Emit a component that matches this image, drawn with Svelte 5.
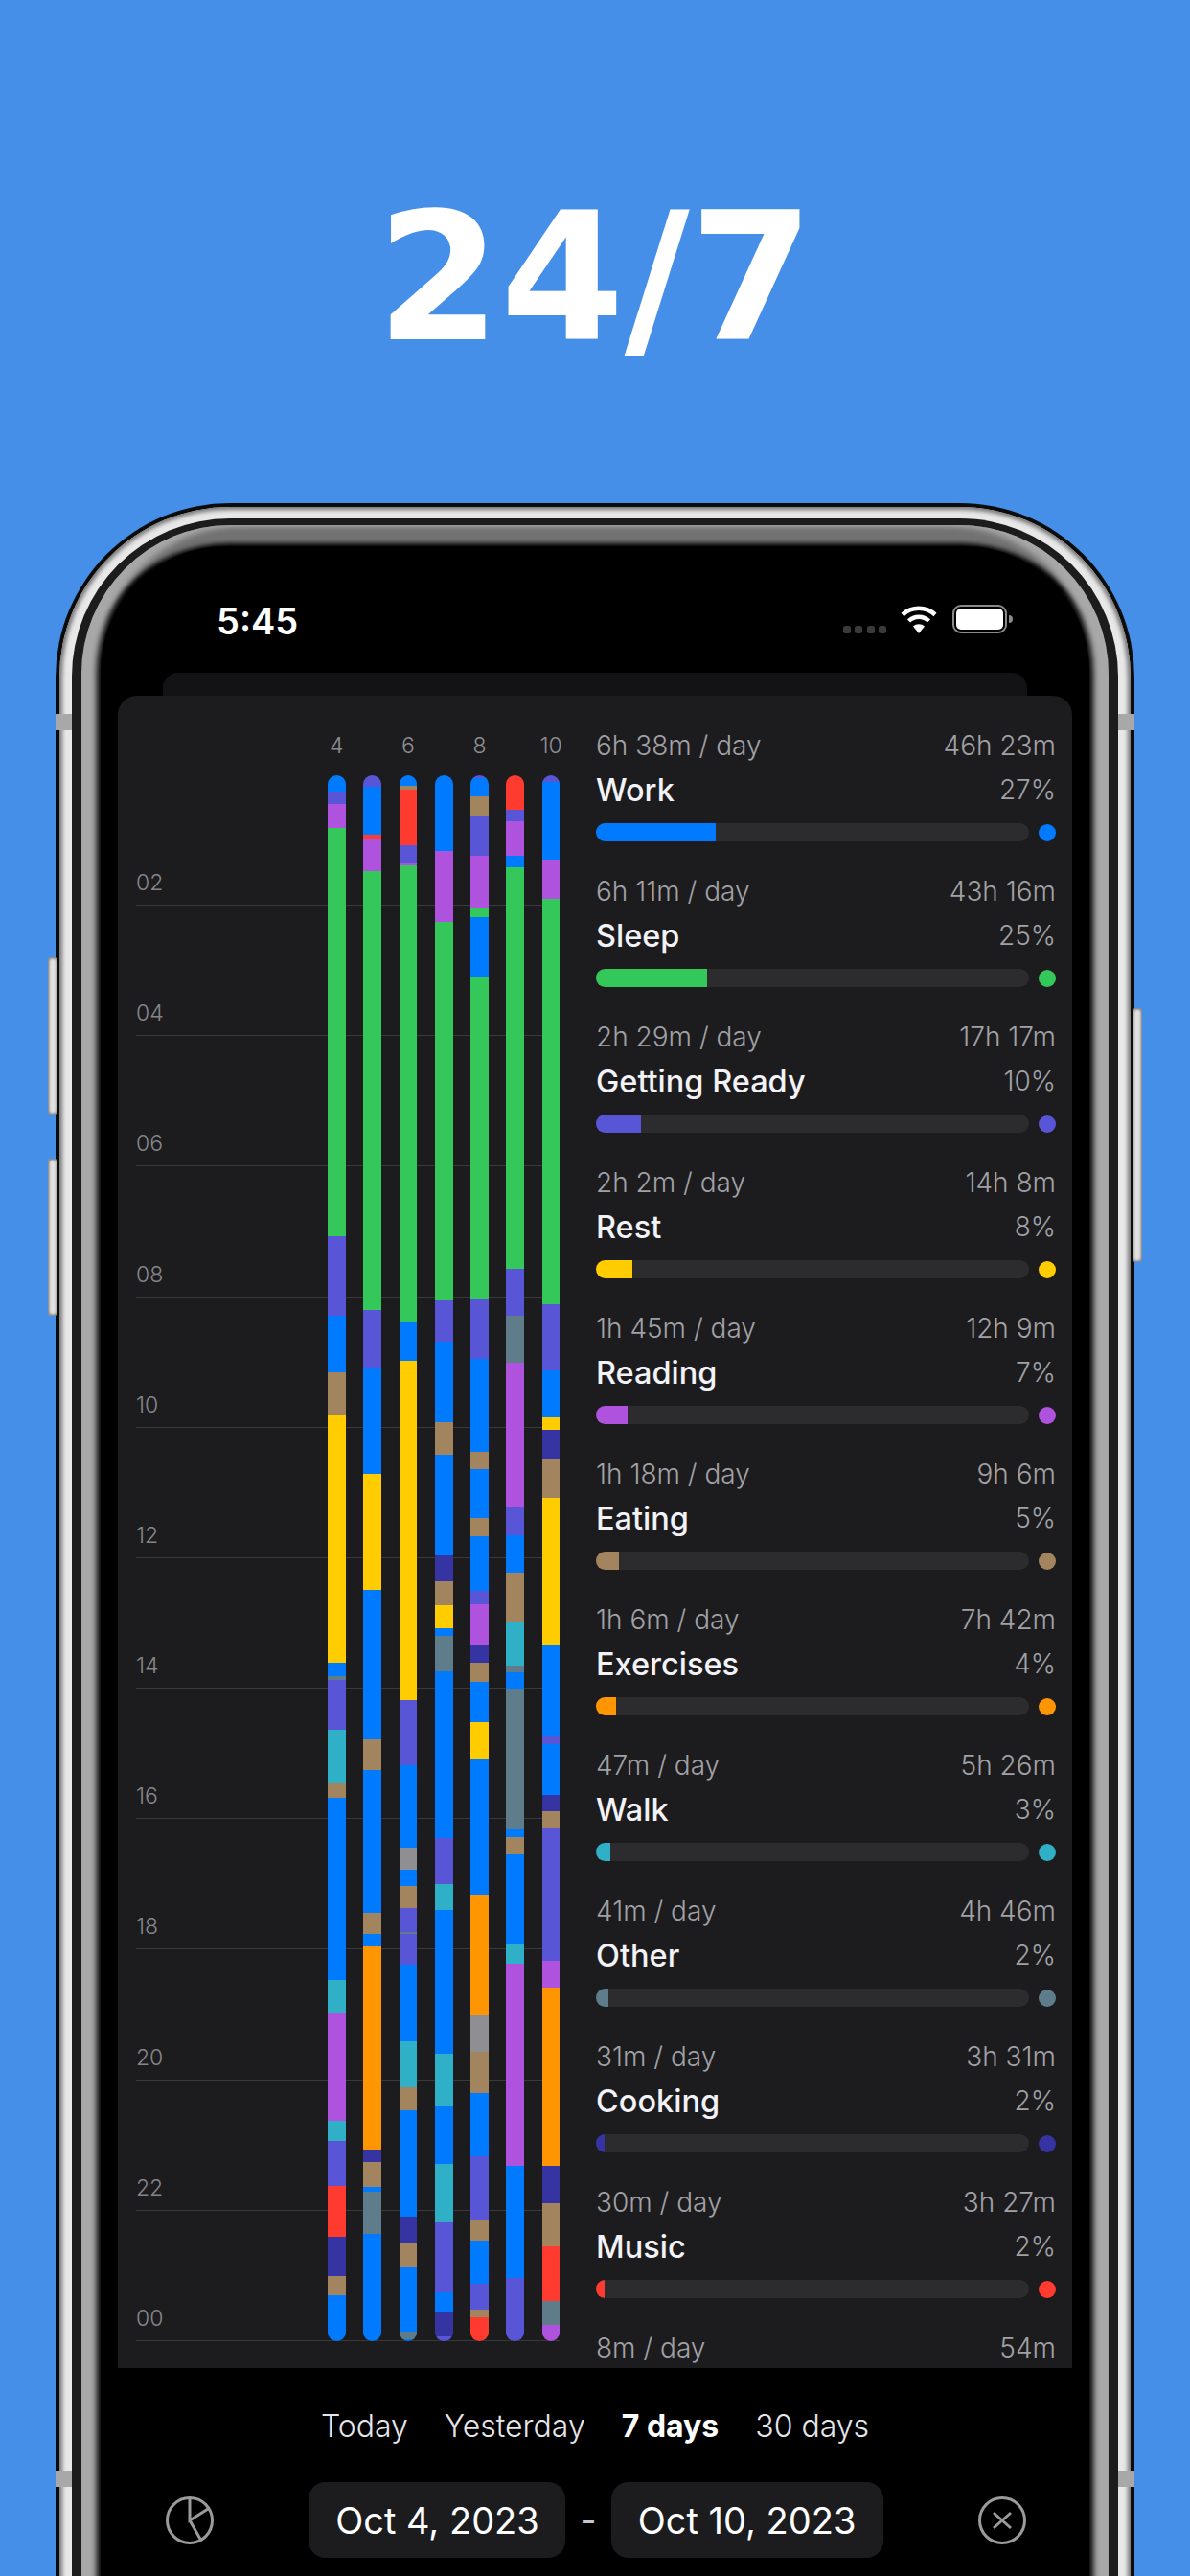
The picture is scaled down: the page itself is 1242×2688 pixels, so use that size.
<script>
	const c = {
		blue: '#007aff',
		green: '#34c759',
		purple: '#af52de',
		indigo: '#5856d6',
		brown: '#a2845e',
		yellow: '#ffcc00',
		orange: '#ff9500',
		red: '#ff3b30',
		teal: '#30b0c7',
		navy: '#3634a3',
		slate: '#5f7c8a',
		gray: '#8e8e93'
	};

	const hours = ['02', '04', '06', '08', '10', '12', '14', '16', '18', '20', '22', '00'];
	const heads = ['4', '', '6', '', '8', '', '10'];

	// each pair is colour + the y where that block stops, measured on the day axis
	const days = [
		['blue', 825, 'indigo', 837.9, 'purple', 862.9, 'green', 1288.9, 'indigo', 1371.8, 'blue', 1430.7, 'brown', 1476.4, 'yellow', 1733.9, 'blue', 1747.9, 'slate', 1752.1, 'indigo', 1803.9, 'teal', 1859.3, 'brown', 1875.4, 'blue', 2065, 'teal', 2098.9, 'purple', 2211.8, 'teal', 2232.9, 'indigo', 2280, 'red', 2333.6, 'navy', 2374.6, 'brown', 2394.3, 'blue', 2442],
		['indigo', 820, 'blue', 870, 'red', 875.4, 'purple', 907.9, 'green', 1366, 'indigo', 1426.4, 'blue', 1537.1, 'yellow', 1657.9, 'blue', 1813.9, 'brown', 1846, 'blue', 1995, 'brown', 2017.5, 'blue', 2030, 'orange', 2242, 'navy', 2255, 'brown', 2281, 'blue', 2286.4, 'slate', 2329.6, 'blue', 2442],
		['blue', 819.3, 'brown', 822.9, 'red', 881.4, 'indigo', 900, 'purple', 902.1, 'green', 1378.9, 'blue', 1418.9, 'yellow', 1772.9, 'indigo', 1840.7, 'blue', 1927, 'gray', 1950, 'blue', 1967, 'brown', 1990.4, 'indigo', 2015, 'slate', 2017, 'indigo', 2048.6, 'blue', 2128.9, 'teal', 2177, 'brown', 2201, 'blue', 2312, 'navy', 2339, 'brown', 2365, 'blue', 2432, 'slate', 2440, 'blue', 2442],
		['blue', 887, 'purple', 961, 'green', 1356, 'indigo', 1399, 'blue', 1483, 'brown', 1517, 'blue', 1622, 'navy', 1649, 'brown', 1674, 'yellow', 1697.5, 'blue', 1705.7, 'slate', 1743, 'blue', 1916.8, 'indigo', 1965, 'teal', 1992, 'blue', 2142, 'teal', 2197, 'blue', 2257, 'teal', 2318, 'indigo', 2391.4, 'blue', 2411, 'navy', 2437, 'indigo', 2442],
		['indigo', 810.7, 'blue', 829.6, 'brown', 850.7, 'indigo', 892.5, 'purple', 945.7, 'green', 956.4, 'blue', 1017.9, 'green', 1354, 'indigo', 1417, 'blue', 1513.6, 'brown', 1532, 'blue', 1583, 'brown', 1602, 'blue', 1659, 'indigo', 1673, 'purple', 1715.7, 'navy', 1734, 'brown', 1753.6, 'blue', 1795.7, 'yellow', 1834, 'blue', 1976.4, 'orange', 2102, 'gray', 2140, 'brown', 2183, 'blue', 2249.6, 'indigo', 2316.4, 'brown', 2337, 'blue', 2381.8, 'indigo', 2409, 'brown', 2416.8, 'red', 2442],
		['red', 843.6, 'indigo', 856, 'purple', 892.5, 'blue', 904, 'green', 1323, 'indigo', 1371.8, 'slate', 1421.4, 'purple', 1572.5, 'indigo', 1601, 'blue', 1640, 'brown', 1692, 'teal', 1736.8, 'slate', 1744, 'blue', 1761, 'slate', 1907, 'blue', 1916, 'brown', 1934, 'blue', 2027, 'teal', 2048, 'purple', 2259, 'blue', 2375.7, 'indigo', 2442],
		['indigo', 814.6, 'blue', 896, 'purple', 937, 'green', 1360, 'indigo', 1429, 'blue', 1478, 'yellow', 1491, 'navy', 1521, 'brown', 1562, 'yellow', 1715, 'blue', 1810, 'indigo', 1819, 'blue', 1871.8, 'navy', 1888.6, 'brown', 1906, 'indigo', 2045, 'purple', 2073, 'orange', 2259, 'navy', 2298, 'brown', 2343, 'red', 2399.6, 'slate', 2425, 'purple', 2442]
	];

	function blocks(day) {
		const out = [];
		let from = 808;
		for (let i = 0; i < day.length; i += 2) {
			out.push({ color: c[day[i]], h: day[i + 1] - from });
			from = day[i + 1];
		}
		return out;
	}

	const rows = [
		{ perDay: '6h 38m / day', total: '46h 23m', mins: 2783, name: 'Work', pct: '27%', color: c.blue },
		{ perDay: '6h 11m / day', total: '43h 16m', mins: 2596, name: 'Sleep', pct: '25%', color: c.green },
		{ perDay: '2h 29m / day', total: '17h 17m', mins: 1037, name: 'Getting Ready', pct: '10%', color: c.indigo },
		{ perDay: '2h 2m / day', total: '14h 8m', mins: 848, name: 'Rest', pct: '8%', color: c.yellow },
		{ perDay: '1h 45m / day', total: '12h 9m', mins: 729, name: 'Reading', pct: '7%', color: c.purple },
		{ perDay: '1h 18m / day', total: '9h 6m', mins: 546, name: 'Eating', pct: '5%', color: c.brown },
		{ perDay: '1h 6m / day', total: '7h 42m', mins: 462, name: 'Exercises', pct: '4%', color: c.orange },
		{ perDay: '47m / day', total: '5h 26m', mins: 326, name: 'Walk', pct: '3%', color: c.teal },
		{ perDay: '41m / day', total: '4h 46m', mins: 286, name: 'Other', pct: '2%', color: c.slate },
		{ perDay: '31m / day', total: '3h 31m', mins: 211, name: 'Cooking', pct: '2%', color: c.navy },
		{ perDay: '30m / day', total: '3h 27m', mins: 207, name: 'Music', pct: '2%', color: c.red },
		{ perDay: '8m / day', total: '54m' }
	];
</script>

<div class="page">
	<h1>24/7</h1>

	<div class="phone">
		<span class="key vol-up"></span>
		<span class="key vol-down"></span>
		<span class="key power"></span>
		<div class="steel">
			<span class="notch-band left top"></span>
			<span class="notch-band right top"></span>
			<span class="notch-band left low"></span>
			<span class="notch-band right low"></span>
			<div class="rim">
				<div class="glass">
					<div class="screen">
						<div class="status">
							<span class="time">5:45</span>
							<div class="status-icons">
								<div class="signal"><i></i><i></i><i></i><i></i></div>
								<svg class="wifi" width="38" height="29" viewBox="0 0 38 29">
									<path d="M2 9.5A25 25 0 0 1 36 9.5" fill="none" stroke="#fff" stroke-width="4.5" />
									<path d="M8.5 16A15 15 0 0 1 29.5 16" fill="none" stroke="#fff" stroke-width="4.5" />
									<path d="M19 29L13 21.5A9 9 0 0 1 25 21.5Z" fill="#fff" />
								</svg>
								<svg class="battery" width="63" height="30" viewBox="0 0 63 30">
									<rect x="1" y="1" width="55" height="28" rx="8" fill="none" stroke="#8a8a8e" stroke-width="2" />
									<rect x="4" y="4" width="49" height="22" rx="5" fill="#fff" />
									<path d="M59 11a4 4 0 0 1 0 8z" fill="#8a8a8e" />
								</svg>
							</div>
						</div>

						<div class="peek"></div>

						<div class="card">
							<div class="chart">
								<div class="lines">
									{#each hours as hour}
										<div class="line"><span>{hour}</span></div>
									{/each}
								</div>
								<div class="bars">
									{#each days as day, i}
										<div class="col">
											<div class="head">{heads[i]}</div>
											<div class="bar">
												{#each blocks(day) as b}
													<div style="height:{b.h}px;background:{b.color}"></div>
												{/each}
											</div>
										</div>
									{/each}
								</div>
							</div>

							<div class="list">
								{#each rows as row}
									<div class="row">
										<div class="meta"><span>{row.perDay}</span><span>{row.total}</span></div>
										{#if row.name}
											<div class="title">
												<span class="name">{row.name}</span>
												<span class="pct">{row.pct}</span>
											</div>
											<div class="progress">
												<div class="track">
													<div style="width:{(row.mins / 10080) * 100}%;background:{row.color}"></div>
												</div>
												<div class="dot" style="background:{row.color}"></div>
											</div>
										{/if}
									</div>
								{/each}
							</div>
						</div>

						<div class="tabs">
							<span>Today</span>
							<span>Yesterday</span>
							<span class="on">7 days</span>
							<span>30 days</span>
						</div>

						<div class="range">
							<svg class="icon" width="50" height="50" viewBox="0 0 50 50">
								<circle cx="25" cy="25" r="23.5" />
								<path d="M25 1.5V25L44 13M25 25L37 46" />
							</svg>
							<div class="dates">
								<div class="pill first">Oct 4, 2023</div>
								<span class="dash">-</span>
								<div class="pill second">Oct 10, 2023</div>
							</div>
							<svg class="icon" width="50" height="50" viewBox="0 0 50 50">
								<circle cx="25" cy="25" r="23.5" />
								<path d="M16 17L34 33M34 17L16 33" />
							</svg>
						</div>
					</div>
				</div>
			</div>
		</div>
	</div>
</div>

<style>
	:global(body) {
		margin: 0;
		background: #458fe8;
	}

	.page {
		height: 2688px;
		overflow: hidden;
		background: #458fe8;
		font-family: Inter, 'Liberation Sans', sans-serif;
		color: #fff;
	}

	h1 {
		margin: 0;
		height: 525px;
		box-sizing: border-box;
		padding-top: 180px;
		text-align: center;
		font-family: 'DejaVu Sans', sans-serif;
		font-size: 186px;
		line-height: 220px;
		font-weight: 700;
	}

	/* frame: a few nested rings, soft shadows stand in for the chrome reflections */
	.phone {
		position: relative;
		width: 1126px;
		margin-left: 58px;
		height: 2400px;
		box-sizing: border-box;
		padding: 4px;
		border-radius: 182px;
		background: #0c0c0c;
	}

	.key {
		position: absolute;
		width: 10px;
		background: #e2e2e2;
		box-shadow: inset 0 0 3px 1px #666;
		border-radius: 4px;
	}

	.vol-up {
		left: -8px;
		top: 474px;
		height: 164px;
	}

	.vol-down {
		left: -8px;
		top: 684px;
		height: 164px;
	}

	.power {
		right: -8px;
		top: 527px;
		height: 265px;
	}

	.steel {
		position: relative;
		height: 100%;
		box-sizing: border-box;
		padding: 12px 13px;
		border-radius: 178px;
		background: #e8e8e8;
		box-shadow: inset 0 0 4px 3px #777;
	}

	.notch-band {
		position: absolute;
		width: 17px;
		height: 17px;
		background: #a8a8a8;
	}

	.notch-band.left {
		left: -4px;
	}

	.notch-band.right {
		right: -4px;
	}

	.notch-band.top {
		top: 216px;
	}

	.notch-band.low {
		top: 2049px;
	}

	.rim {
		height: 100%;
		box-sizing: border-box;
		padding: 7px 10px;
		border-radius: 165px;
		background: #1c1c1c;
	}

	.glass {
		height: 100%;
		box-sizing: border-box;
		padding: 22px 20px 0;
		border-radius: 155px;
		background: #000;
		box-shadow:
			inset 16px 0 6px 0 #a8a8a8,
			inset -16px 0 6px 0 #a8a8a8,
			inset 0 19px 5px 0 #727272;
	}

	.screen {
		height: 100%;
		box-sizing: border-box;
		padding: 0 18px;
		border-radius: 130px 130px 0 0;
		background: #000;
	}

	.status {
		height: 132px;
		display: flex;
		justify-content: space-between;
		align-items: flex-start;
		padding: 0 69px 0 121px;
		box-sizing: border-box;
		margin: 0 -18px;
	}

	.time {
		margin-top: 55px;
		font-size: 38px;
		line-height: 46px;
		font-weight: 600;
	}

	.status-icons {
		display: flex;
		align-items: flex-end;
		margin-top: 61px;
		margin-right: 11px;
	}

	.signal {
		display: flex;
		gap: 4.5px;
		margin-right: 15px;
	}

	.signal i {
		width: 8px;
		height: 8px;
		border-radius: 2.5px;
		background: #3a3a3c;
	}

	.wifi {
		margin-right: 16px;
	}

	.battery {
		display: block;
	}

	.peek {
		height: 24px;
		margin: 0 47px;
		border-radius: 16px 16px 0 0;
		background: #131315;
	}

	.card {
		display: flex;
		height: 1745px;
		overflow: hidden;
		border-radius: 20px 20px 0 0;
		background: #1c1c1e;
	}

	.chart {
		display: grid;
		flex: none;
		width: 441px;
		margin-left: 19px;
		height: 1717px;
	}

	.lines,
	.bars {
		grid-area: 1 / 1;
	}

	.lines {
		padding-top: 83px;
	}

	.line {
		height: 136.17px;
		box-sizing: border-box;
		border-bottom: 1.5px solid #39393b;
		display: flex;
		align-items: flex-end;
		color: #86868a;
		font-size: 23px;
		font-weight: 300;
		line-height: 28px;
		padding-bottom: 9px;
	}

	.bars {
		display: flex;
		gap: 18.6px;
		padding-left: 200px;
	}

	.col {
		flex: none;
		width: 18.7px;
		display: flex;
		flex-direction: column;
		align-items: center;
	}

	.head {
		height: 83px;
		box-sizing: border-box;
		padding-top: 38px;
		color: #8e8e93;
		font-size: 23px;
		font-weight: 300;
		line-height: 28px;
		white-space: nowrap;
	}

	.bar {
		width: 100%;
		height: 1634px;
		border-radius: 10px;
		overflow: hidden;
	}

	.list {
		flex: 1;
		min-width: 0;
		margin-left: 39px;
		margin-right: 17px;
		padding-top: 31px;
	}

	.row {
		height: 152px;
	}

	.meta,
	.title {
		display: flex;
		justify-content: space-between;
		align-items: center;
	}

	.meta {
		height: 42px;
		color: #a1a1a6;
		font-size: 28px;
		font-weight: 300;
	}

	.title {
		height: 50px;
		font-size: 32.5px;
		font-weight: 500;
		color: #f2f2f7;
	}

	.pct {
		color: #a1a1a6;
		font-size: 28px;
		font-weight: 300;
	}

	.progress {
		display: flex;
		align-items: center;
		gap: 10px;
		margin-top: 10px;
	}

	.track {
		flex: 1;
		height: 19px;
		overflow: hidden;
		border-radius: 10px;
		background: #2c2c2e;
	}

	.track div {
		height: 100%;
	}

	.dot {
		flex: none;
		width: 18px;
		height: 18px;
		border-radius: 50%;
	}

	.tabs {
		display: flex;
		justify-content: center;
		gap: 38px;
		height: 119px;
		box-sizing: border-box;
		padding-top: 41px;
		font-size: 32px;
		line-height: 40px;
		font-weight: 300;
		color: #e5e5ea;
	}

	.tabs .on {
		font-weight: 700;
		color: #fff;
	}

	.range {
		display: flex;
		justify-content: space-between;
		align-items: center;
		padding: 0 48px 0 50px;
	}

	.icon {
		flex: none;
	}

	.icon circle,
	.icon path {
		fill: none;
		stroke: #9a9a9a;
		stroke-width: 3;
	}

	.dates {
		display: flex;
		align-items: center;
		gap: 15px;
	}

	.pill {
		height: 79px;
		box-sizing: border-box;
		display: flex;
		align-items: center;
		justify-content: center;
		border-radius: 18px;
		background: #1c1c1e;
		font-size: 38px;
		font-weight: 400;
	}

	.first {
		width: 268px;
	}

	.second {
		width: 284px;
	}

	.dash {
		color: #c7c7cc;
		font-size: 37px;
	}
</style>
